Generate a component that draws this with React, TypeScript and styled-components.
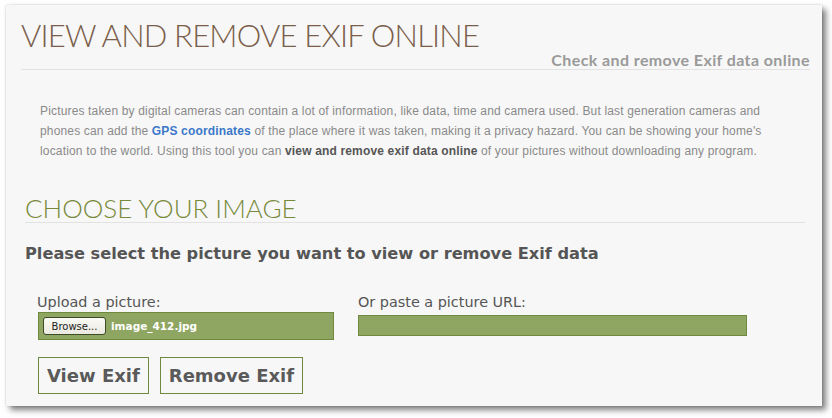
import React from "react";
import styled, { createGlobalStyle } from "styled-components";

const Global = createGlobalStyle`
  html, body { margin: 0; padding: 0; background: #ffffff; }
  body { font-family: "Liberation Sans", Arial, sans-serif; }
`;

const Page = styled.div`
  width: 832px;
  height: 418px;
  padding: 5px 0 0 6px;
  box-sizing: border-box;
`;

const Panel = styled.div`
  width: 816px;
  height: 401px;
  box-sizing: border-box;
  background: #f7f7f7;
  box-shadow: 0 0 2px rgba(0, 0, 0, 0.18), 4px 4px 6px rgba(0, 0, 0, 0.5);
  padding: 11px 12px 0 15px;
  display: flex;
  flex-direction: column;
`;

const Title = styled.h1`
  margin: 0;
  font-family: Lato, "Open Sans", sans-serif;
  font-weight: 300;
  font-size: 31px;
  line-height: 38px;
  color: #7a5e4a;
  letter-spacing: -0.8px;
`;

const SubTitle = styled.div`
  align-self: flex-end;
  margin-top: -3px;
  font-family: Lato, sans-serif;
  font-weight: 700;
  font-size: 16px;
  line-height: 18px;
  letter-spacing: 0.4px;
  color: #9a9a9a;
`;

const Rule = styled.hr`
  border: 0;
  height: 1px;
  background: #e2e2e2;
  margin: 0;
  width: 100%;
`;

const Intro = styled.p`
  margin: 31px 0 0 19px;
  font-family: "Liberation Sans", Arial, sans-serif;
  font-size: 12px;
  letter-spacing: 0.16px;
  line-height: 20px;
  color: #8a8a8a;
  width: 750px;
`;

const Link = styled.a`
  color: #3b78c9;
  font-weight: 700;
  text-decoration: none;
`;

const Strong = styled.b`
  color: #555555;
`;

const Section = styled.div`
  margin: 33px 5px 0 4px;
  display: flex;
  flex-direction: column;
`;

const SectionTitle = styled.h2`
  margin: 0;
  font-family: Lato, "Open Sans", sans-serif;
  font-weight: 300;
  font-size: 26px;
  line-height: 28px;
  color: #78893a;
`;

const Lead = styled.div`
  margin-top: 20px;
  font-family: "DejaVu Sans", Verdana, sans-serif;
  font-weight: 700;
  font-size: 16.2px;
  line-height: 22px;
  color: #555555;
`;

const Fields = styled.div`
  margin-top: 29px;
  margin-left: 16px;
  display: flex;
  gap: 24px;
  align-items: flex-start;
`;

const Field = styled.div`
  display: flex;
  flex-direction: column;
`;

const Label = styled.label`
  font-family: "DejaVu Sans", Verdana, sans-serif;
  font-size: 14.4px;
  line-height: 17px;
  color: #555555;
`;

const FileBox = styled.div`
  margin-top: 1px;
  margin-left: 1px;
  width: 296px;
  height: 28px;
  box-sizing: border-box;
  background: #8fa662;
  border: 1px solid #6e8a3e;
  display: flex;
  align-items: center;
  padding-left: 4px;
  gap: 5px;
`;

const Browse = styled.span`
  width: 63px;
  height: 18px;
  box-sizing: border-box;
  border: 1px solid #3f4a2a;
  border-radius: 3px;
  background: linear-gradient(#fbfbf6, #e9e9df);
  font-family: "DejaVu Sans", Tahoma, sans-serif;
  font-size: 10px;
  color: #222;
  display: flex;
  align-items: center;
  justify-content: center;
`;

const FileName = styled.span`
  font-family: "DejaVu Sans", Verdana, sans-serif;
  font-weight: 700;
  font-size: 10.5px;
  color: #ffffff;
`;

const UrlBox = styled.div`
  margin-top: 4px;
  width: 389px;
  height: 21px;
  box-sizing: border-box;
  background: #8fa662;
  border: 1px solid #6e8a3e;
`;

const Buttons = styled.div`
  margin-top: 17px;
  margin-left: 17px;
  display: flex;
  gap: 11px;
`;

const Button = styled.button`
  height: 37px;
  box-sizing: border-box;
  padding: 0 8px;
  background: #f7f7f7;
  border: 1px solid #6e8a3e;
  font-family: "DejaVu Sans", Verdana, sans-serif;
  font-weight: 700;
  font-size: 18px;
  color: #5a5a5a;
`;

export default function App() {
  return (
    <Page>
      <Global />
      <Panel>
        <Title>VIEW AND REMOVE EXIF ONLINE</Title>
        <SubTitle>Check and remove Exif data online</SubTitle>
        <Rule />
        <Intro>
          Pictures taken by digital cameras can contain a lot of information, like data, time and camera used. But last
          generation cameras and phones can add the <Link>GPS coordinates</Link> of the place where it was taken, making
          it a privacy hazard. You can be showing your home's location to the world. Using this tool you can{" "}
          <Strong>view and remove exif data online</Strong> of your pictures without downloading any program.
        </Intro>
        <Section>
          <SectionTitle>CHOOSE YOUR IMAGE</SectionTitle>
          <Rule />
          <Lead>Please select the picture you want to view or remove Exif data</Lead>
        </Section>
        <Fields>
          <Field>
            <Label>Upload a picture:</Label>
            <FileBox>
              <Browse>Browse...</Browse>
              <FileName>image_412.jpg</FileName>
            </FileBox>
          </Field>
          <Field>
            <Label>Or paste a picture URL:</Label>
            <UrlBox />
          </Field>
        </Fields>
        <Buttons>
          <Button>View Exif</Button>
          <Button>Remove Exif</Button>
        </Buttons>
      </Panel>
    </Page>
  );
}
